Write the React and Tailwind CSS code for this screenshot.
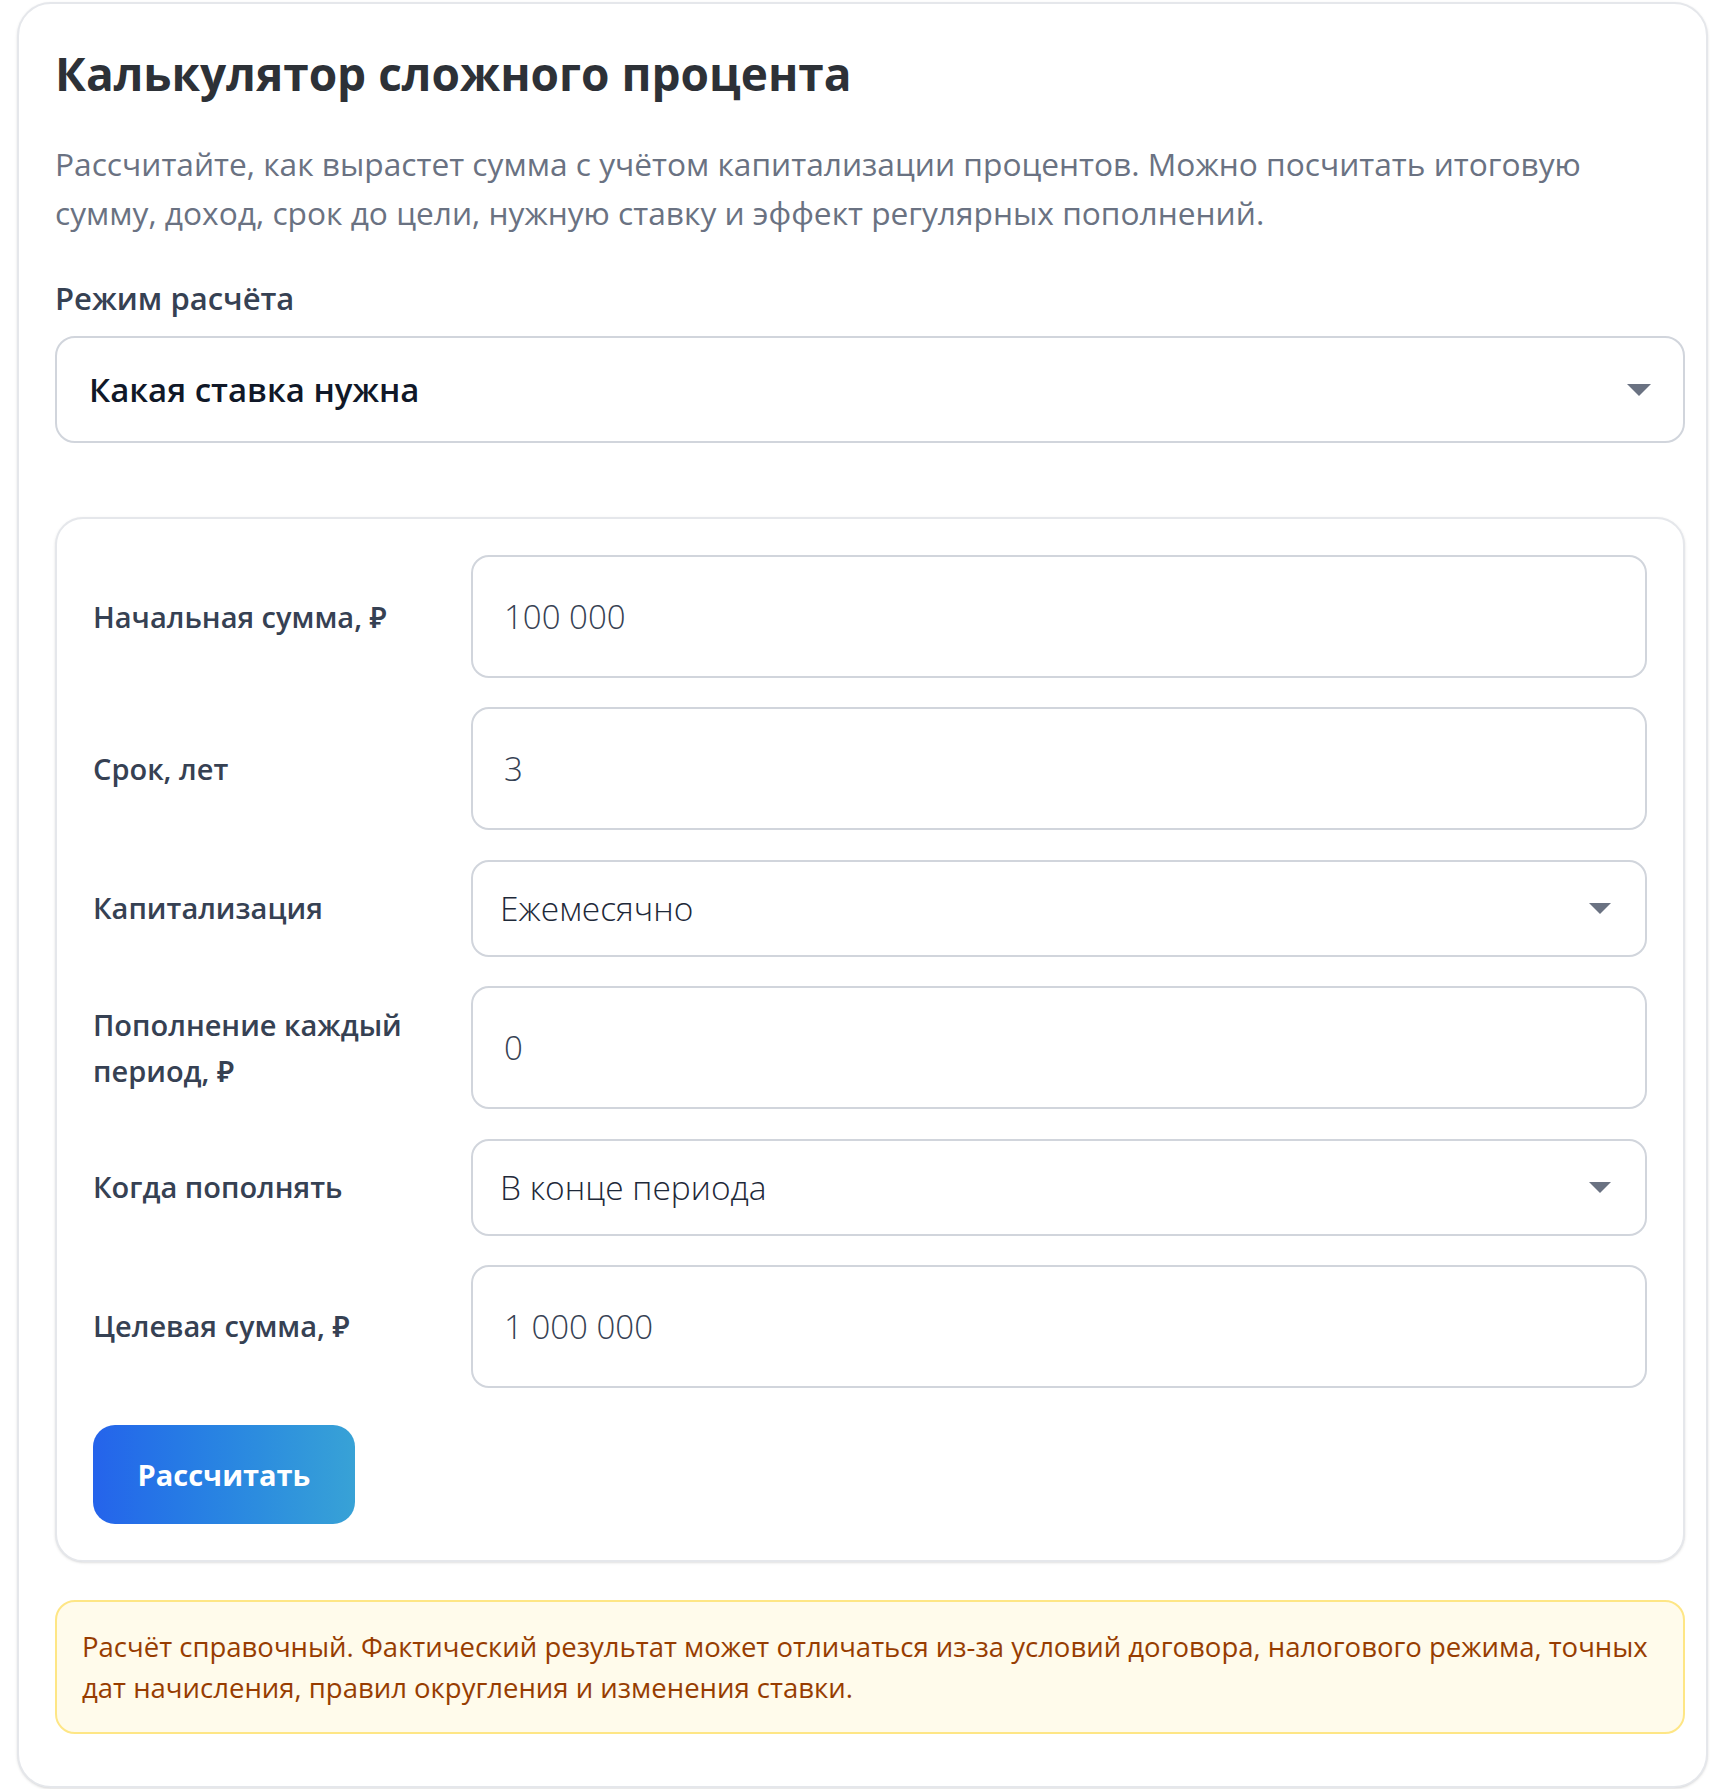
import React from "react";

const FONT = { fontFamily: '"Open Sans", "Noto Sans", "Liberation Sans", sans-serif' };

const Caret = ({ className }) => (
    <svg viewBox="0 0 24 12" className={className} fill="currentColor">
        <path d="M0 0h24L12 12z" />
    </svg>
);

const TextField = ({ value }) => (
    <input
        type="text"
        defaultValue={value}
        className="w-full h-[123px] rounded-[18px] border-2 border-gray-300 bg-white pl-[31px] text-[33px] font-light text-gray-700 outline-none"
        style={FONT}
    />
);

const SelectField = ({ value }) => (
    <div className="w-full h-[97px] rounded-[18px] border-2 border-gray-300 bg-white pl-[27px] pr-[34px] flex items-center justify-between">
        <span className="text-[33.5px] font-light text-gray-800">{value}</span>
        <Caret className="w-[22px] h-[11px] text-gray-500" />
    </div>
);

const Row = ({ label, children }) => (
    <div className="grid grid-cols-[350px_1fr] gap-x-[28px] items-center">
        <div className="text-[29px] leading-[46px] font-semibold text-gray-700">{label}</div>
        {children}
    </div>
);

export default function App() {
    return (
        <div className="bg-white min-h-screen" style={FONT}>
            <div className="ml-[17px] mt-[2px] w-[1691px] rounded-[34px] border-2 border-gray-200 shadow-sm bg-white pl-[36px] pr-[21px] pt-[39px] pb-[52px]">
                <h1 className="text-[46px] leading-[60px] font-bold text-[#2d3137]">Калькулятор сложного процента</h1>

                <p className="mt-[36px] text-[31.7px] leading-[49px] text-gray-500 max-w-[1610px]">
                    Рассчитайте, как вырастет сумма с учётом капитализации процентов. Можно посчитать итоговую
                    сумму, доход, срок до цели, нужную ставку и эффект регулярных пополнений.
                </p>

                {/* mode select */}
                <div className="mt-[41px] text-[31px] leading-[40px] font-semibold text-gray-700">Режим расчёта</div>
                <div className="mt-[18px] h-[107px] rounded-[20px] border-2 border-gray-300 bg-white pl-[32px] pr-[32px] flex items-center justify-between">
                    <span className="text-[33px] font-semibold text-gray-900">Какая ставка нужна</span>
                    <Caret className="w-[24px] h-[12px] text-gray-500" />
                </div>

                {/* inputs */}
                <div className="mt-[74px] rounded-[28px] border-2 border-gray-200 shadow-sm bg-white p-[36px]">
                    <div className="flex flex-col gap-[29.4px]">
                        <Row label="Начальная сумма, ₽"><TextField value="100 000" /></Row>
                        <Row label="Срок, лет"><TextField value="3" /></Row>
                        <Row label="Капитализация"><SelectField value="Ежемесячно" /></Row>
                        <Row label="Пополнение каждый период, ₽"><TextField value="0" /></Row>
                        <Row label="Когда пополнять"><SelectField value="В конце периода" /></Row>
                        <Row label="Целевая сумма, ₽"><TextField value="1 000 000" /></Row>
                    </div>
                    <button className="mt-[37px] w-[262px] h-[99px] rounded-[22px] bg-gradient-to-r from-[#2563eb] to-[#38a2d6] text-white text-[29px] font-bold">
                        Рассчитать
                    </button>
                </div>

                {/* note */}
                <div className="mt-[38px] rounded-[20px] border-2 border-amber-200 bg-[#fffbeb] px-[25px] py-[24px] text-[27.5px] leading-[41px] text-amber-800">
                    Расчёт справочный. Фактический результат может отличаться из-за условий договора, налогового режима, точных
                    дат начисления, правил округления и изменения ставки.
                </div>
            </div>
        </div>
    );
}
